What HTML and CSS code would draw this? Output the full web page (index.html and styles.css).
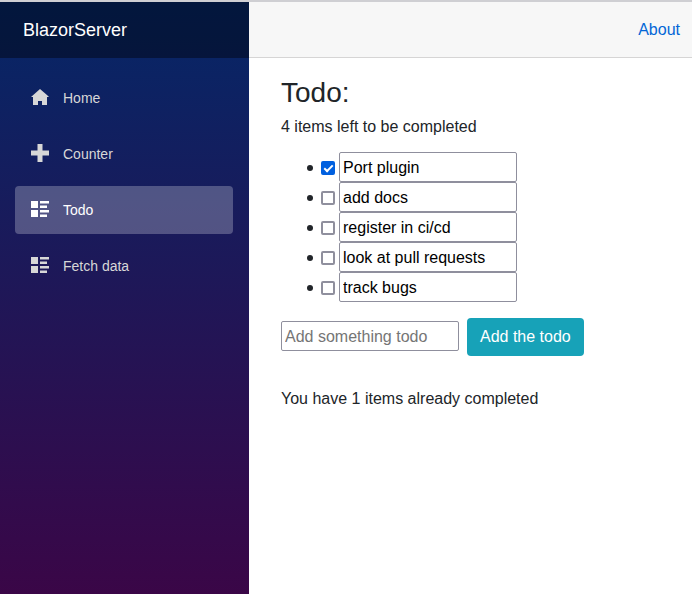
FILE: index.html
```html
<!DOCTYPE html>
<html lang="en">
<head>
  <meta charset="utf-8">
  <meta name="viewport" content="width=device-width, initial-scale=1">
  <title>BlazorServer</title>
  <link rel="stylesheet" href="styles.css">
</head>
<body>
  <svg class="sprite" aria-hidden="true">
    <symbol id="icon-home" viewBox="0 0 18 18">
      <path d="M9 1 0 9h2v8h5v-4h4v4h5V9h2l-2-2z"/>
    </symbol>
    <symbol id="icon-plus" viewBox="0 0 18 18">
      <path d="M6.5 0h5v6.500h6.500v5h-6.500v6.500h-5v-6.500H0v-5h6.500z"/>
    </symbol>
    <symbol id="icon-list" viewBox="0 0 18 18">
      <path d="M0 1h7v7H0zM9 1h9v2.600H9zM9 5.600h7V8H9zM0 10h7v7H0zM9 10h9v2.600H9zM9 14.600h7V17H9z"/>
    </symbol>
  </svg>
  <div class="page">
    <div class="sidebar">
      <div class="brand-bar"><a class="brand" href="#">BlazorServer</a></div>
      <nav class="nav">
        <a class="nav-link" href="#"><svg class="icon" aria-hidden="true"><use href="#icon-home"/></svg>Home</a>
        <a class="nav-link" href="#"><svg class="icon" aria-hidden="true"><use href="#icon-plus"/></svg>Counter</a>
        <a class="nav-link active" href="#" aria-current="page"><svg class="icon" aria-hidden="true"><use href="#icon-list"/></svg>Todo</a>
        <a class="nav-link" href="#"><svg class="icon" aria-hidden="true"><use href="#icon-list"/></svg>Fetch data</a>
      </nav>
    </div>
    <div class="main">
      <header class="top-row"><a class="about" href="#">About</a></header>
      <main class="content">
        <h1>Todo:</h1>
        <p class="remaining">4 items left to be completed</p>
        <ul class="todos">
          <li class="todo"><input class="check" type="checkbox" aria-label="Port plugin done" checked><input class="field" type="text" aria-label="Todo 1" value="Port plugin"></li>
          <li class="todo"><input class="check" type="checkbox" aria-label="add docs done"><input class="field" type="text" aria-label="Todo 2" value="add docs"></li>
          <li class="todo"><input class="check" type="checkbox" aria-label="register in ci/cd done"><input class="field" type="text" aria-label="Todo 3" value="register in ci/cd"></li>
          <li class="todo"><input class="check" type="checkbox" aria-label="look at pull requests done"><input class="field" type="text" aria-label="Todo 4" value="look at pull requests"></li>
          <li class="todo"><input class="check" type="checkbox" aria-label="track bugs done"><input class="field" type="text" aria-label="Todo 5" value="track bugs"></li>
        </ul>
        <form class="add">
          <input class="field" type="text" aria-label="New todo" placeholder="Add something todo">
          <button class="button" type="button">Add the todo</button>
        </form>
        <p class="done">You have 1 items already completed</p>
      </main>
    </div>
  </div>
</body>
</html>
```
FILE: styles.css
```css
*,
*::before {
  box-sizing: border-box;
}

body {
  margin: 0;
  border-top: 2px solid #cfcfd3;
  background: #fff;
  color: #212529;
  font: 16px/24px "Liberation Sans", Arial, sans-serif;
}

a {
  text-decoration: none;
}

.sprite {
  display: none;
}

.page {
  display: flex;
  min-height: calc(100vh - 2px);
}

.sidebar {
  flex: 0 0 249px;
  background: linear-gradient(180deg, #052767, #3a0647);
}

.brand-bar,
.top-row {
  display: flex;
  align-items: center;
  height: 56px;
}

.brand-bar {
  padding: 0 23px;
  background: rgba(0, 0, 0, 0.4);
}

.brand {
  color: #fff;
  font-size: 18px;
}

.nav {
  display: grid;
  gap: 8px;
  padding: 16px 16px 16px 15px;
}

.nav-link {
  display: flex;
  align-items: center;
  gap: 14px;
  height: 48px;
  padding: 0 16px;
  border-radius: 4px;
  color: #d7d7d7;
  font-size: 14px;
}

.nav-link.active {
  background: rgba(255, 255, 255, 0.25);
  color: #fff;
}

.icon {
  width: 18px;
  height: 18px;
  margin-bottom: 2px;
  fill: currentColor;
}

.main {
  flex: 1;
  min-width: 0;
}

.top-row {
  justify-content: flex-end;
  padding: 0 12px;
  border-bottom: 1px solid #d6d5d5;
  background: #f7f7f7;
}

.about {
  color: #0366d6;
}

.content {
  padding: 18px 32px;
}

h1 {
  margin: 0 0 5px;
  font-size: 28px;
  font-weight: 400;
  line-height: 34px;
}

p {
  margin: 0;
}

.todos {
  margin: 13px 0 16px;
  padding-left: 26px;
  list-style: none;
}

.todo {
  display: flex;
  align-items: center;
  gap: 4px;
}

.todo::before {
  content: "";
  width: 6px;
  height: 6px;
  margin: 2px 4px 0 0;
  border-radius: 50%;
  background: #212529;
}

.check {
  appearance: none;
  display: grid;
  place-items: center;
  width: 14px;
  height: 14px;
  margin: 2px 0 0;
  border: 2px solid #8f8f9d;
  border-radius: 2px;
  background: #fff;
}

.check:checked {
  border-color: #0060df;
  background: #0060df;
}

.check:checked::before {
  content: "";
  width: 5px;
  height: 9px;
  margin-bottom: 2px;
  border: solid #fff;
  border-width: 0 2px 2px 0;
  transform: rotate(45deg);
}

.field {
  width: 178px;
  height: 30px;
  padding: 1px 3px 0;
  border: 1px solid #8f8f9d;
  border-radius: 2px;
  background: #fff;
  color: #000;
  font: inherit;
}

.field::placeholder {
  color: #757575;
  opacity: 1;
}

.add {
  display: flex;
  flex-wrap: wrap;
  align-items: center;
  gap: 8px;
}

.add .field {
  margin-bottom: 2px;
}

.button {
  height: 38px;
  padding: 0 13px;
  border: 0;
  border-radius: 4px;
  background: #17a2b8;
  color: #fff;
  font: inherit;
}

.done {
  margin-top: 31px;
}
```
